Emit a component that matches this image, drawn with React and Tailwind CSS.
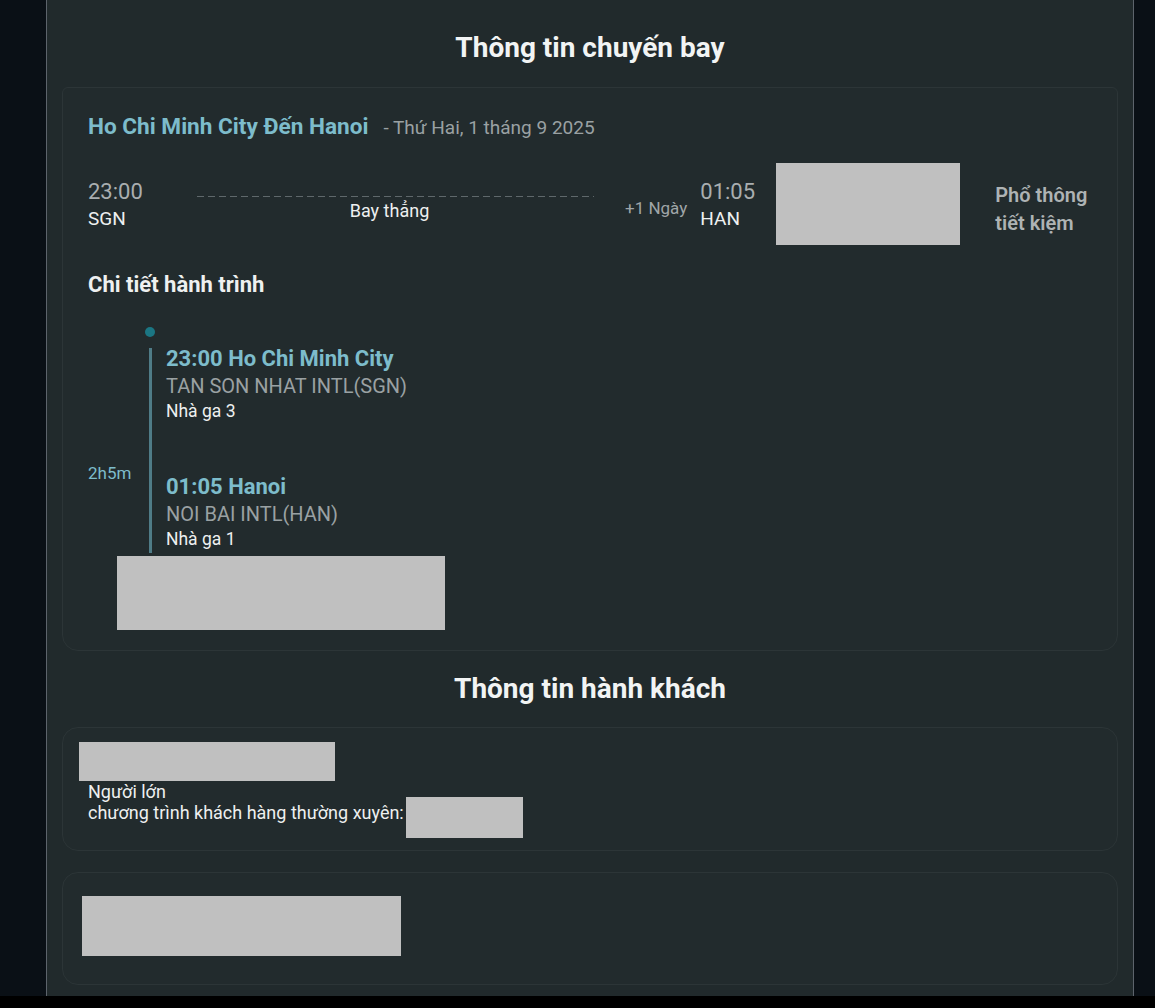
export default function App() {
  return (
    <div className="flex h-[1008px] flex-col bg-[#0a1016] font-['Roboto',sans-serif] text-[#eef0f0]">
      <div className="ml-[46px] flex min-h-0 w-[1088px] flex-1 flex-col border-x border-[#5d646c] bg-[#212a2c] px-[15px]">
        <h2 className="pt-[30px] pb-[21px] text-center text-[28px] font-bold leading-[36px] text-[#f2f4f4]">
          Thông tin chuyến bay
        </h2>

        <section className="rounded-b-2xl rounded-t-md border border-[#2c3537] bg-[#222b2d] px-[25px] pb-[20px] pt-[25px]">
          <div className="flex items-baseline gap-[15px] leading-[28px]">
            <span className="text-[22.6px] font-bold text-[#7dbccb]">Ho Chi Minh City Đến Hanoi</span>
            <span className="text-[19px] text-[#9aa1a3]">- Thứ Hai, 1 tháng 9 2025</span>
          </div>

          <div className="mt-[21px] flex items-start">
            <div className="w-[109px] pt-[16px]">
              <div className="text-[22px] leading-[26px] text-[#a9aeb0]">23:00</div>
              <div className="text-[19px] leading-[28px] text-[#eef0f0]">SGN</div>
            </div>
            <div className="w-[397px] pt-[33px]">
              {/* dashed connector between departure and arrival */}
              <div className="h-px bg-[repeating-linear-gradient(90deg,#5f686b_0_7px,transparent_7px_11px)]" />
              <div className="mt-[3px] pr-[12px] text-center text-[18px] leading-[22px]">Bay thẳng</div>
            </div>
            <div className="ml-[31px] pt-[34px] text-[17px] leading-[22px] text-[#a0a6a8]">+1 Ngày</div>
            <div className="ml-[13px] w-[76px] pt-[16px]">
              <div className="text-[22px] leading-[26px] text-[#a9aeb0]">01:05</div>
              <div className="text-[19px] leading-[28px] text-[#eef0f0]">HAN</div>
            </div>
            <div className="h-[82px] w-[184px] bg-[#c0c0c0]" />
            <div className="ml-[35px] pt-[18px] text-[20px] font-semibold leading-[28px] text-[#aeb3b4]">
              Phổ thông
              <br />
              tiết kiệm
            </div>
          </div>

          <h3 className="mt-[26px] text-[22px] font-bold leading-[28px]">Chi tiết hành trình</h3>

          <div className="mt-[28px] flex">
            <div className="w-[57px] pt-[135px] text-[17px] leading-[22px] text-[#7dbccb]">2h5m</div>
            <div className="flex w-[10px] flex-col items-center">
              <span className="h-[10px] w-[10px] rounded-full bg-[#1b7683]" />
              <span className="mt-[11px] h-[205px] w-[3px] bg-[#4f7c87]" />
            </div>
            <div className="ml-[11px] pt-[18px]">
              <div className="text-[22px] font-bold leading-[28px] text-[#7dbccb]">23:00 Ho Chi Minh City</div>
              <div className="text-[20px] leading-[26px] text-[#9aa1a3]">TAN SON NHAT INTL(SGN)</div>
              <div className="text-[17.5px] leading-[24px]">Nhà ga 3</div>
              <div className="mt-[50px] text-[22px] font-bold leading-[28px] text-[#7dbccb]">01:05 Hanoi</div>
              <div className="text-[20px] leading-[26px] text-[#9aa1a3]">NOI BAI INTL(HAN)</div>
              <div className="text-[17.5px] leading-[24px]">Nhà ga 1</div>
            </div>
          </div>
          <div className="mt-[3px] ml-[29px] h-[74px] w-[328px] bg-[#c0c0c0]" />
        </section>

        <h2 className="pt-[20px] pb-[20px] text-center text-[28px] font-bold leading-[36px] text-[#f2f4f4]">
          Thông tin hành khách
        </h2>

        <section className="rounded-2xl border border-[#2c3537] bg-[#222b2d] px-[16px] pb-[12px] pt-[14px]">
          <div className="h-[39px] w-[256px] bg-[#c0c0c0]" />
          <div className="pl-[9px] text-[18px] leading-[21px]">
            <div>Người lớn</div>
            <div className="flex items-start">
              <span>chương trình khách hàng thường xuyên:</span>
              <span className="-mt-[5px] ml-[2px] h-[41px] w-[117px] bg-[#c0c0c0]" />
            </div>
          </div>
        </section>

        <section className="mt-[21px] rounded-2xl border border-[#2c3537] bg-[#222b2d] px-[19px] pb-[28px] pt-[23px]">
          <div className="h-[60px] w-[319px] bg-[#c0c0c0]" />
        </section>
      </div>
      <div className="h-[12px] bg-black" />
    </div>
  )
}
